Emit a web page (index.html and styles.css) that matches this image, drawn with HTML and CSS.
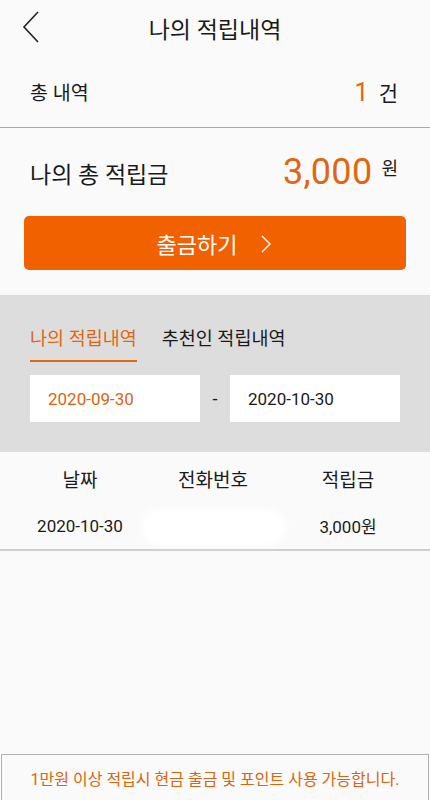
FILE: index.html
```html
<!DOCTYPE html>
<html lang="ko">
<head>
<meta charset="utf-8">
<link rel="stylesheet" href="styles.css">
</head>
<body>
<div class="page">
  <header class="topbar">
    <svg class="back" width="20" height="34" viewBox="0 0 20 34"><path d="M16 1 L2 16 L16 31" fill="none" stroke="#222" stroke-width="1.6"/></svg>
    <h1 class="title">나의 적립내역</h1>
  </header>
  <div class="count-row">
    <span>총 내역</span>
    <span class="count"><b class="orange">1</b> 건</span>
  </div>
  <div class="total-row">
    <span class="total-label">나의 총 적립금</span>
    <span class="total-val"><b class="orange big">3,000</b><span class="won">원</span></span>
  </div>
  <div class="btn-wrap">
    <button class="withdraw">출금하기 <svg class="chev" width="10" height="18" viewBox="0 0 10 18"><path d="M1 1 L9 9 L1 17" fill="none" stroke="#fff" stroke-width="1.4"/></svg></button>
  </div>
  <section class="filter">
    <nav class="tabs">
      <span class="tab active">나의 적립내역</span>
      <span class="tab">추천인 적립내역</span>
    </nav>
    <div class="dates">
      <div class="date orange-text">2020-09-30</div>
      <span class="dash">-</span>
      <div class="date">2020-10-30</div>
    </div>
  </section>
  <div class="table">
    <div class="trow head"><span>날짜</span><span>전화번호</span><span>적립금</span></div>
    <div class="trow body"><span>2020-10-30</span><span class="blur"></span><span>3,000원</span></div>
  </div>
  <div class="spacer"></div>
  <footer class="notice">1만원 이상 적립시 현금 출금 및 포인트 사용 가능합니다.</footer>
</div>
</body>
</html>
```
FILE: styles.css
```css
* { box-sizing: border-box; }
html, body { margin: 0; padding: 0; }
body {
  background: #fafafa;
  font-family: "Roboto", "Noto Sans CJK KR", sans-serif;
  color: #1a1a1a;
}
.page {
  width: 430px;
  height: 800px;
  display: flex;
  flex-direction: column;
}
.topbar {
  height: 56px;
  display: flex;
  align-items: center;
  justify-content: center;
  position: relative;
}
.back { position: absolute; left: 22px; top: 11px; }
.title {
  margin: 0;
  font-size: 23px;
  font-weight: 400;
  padding-left: 0;
}
.orange { color: #e0670f; font-weight: 400; }
.orange-text { color: #d9650f; }
.count-row {
  height: 72px;
  display: flex;
  justify-content: space-between;
  align-items: center;
  padding: 0 32px 0 30px;
  font-size: 19.5px;
  border-bottom: 1px solid #a8a8a8;
}
.count { font-size: 21px; }
.count b { font-size: 25px; margin-right: 5px; }
.total-row {
  height: 88px;
  display: flex;
  justify-content: space-between;
  align-items: center;
  padding: 0 32px 0 30px;
}
.total-label { font-size: 23px; padding-top: 2px; }
.total-val { display: flex; align-items: flex-start; }
.big { font-size: 36px; line-height: 40px; letter-spacing: 0.3px; }
.won { font-size: 18px; margin-left: 9px; margin-top: 2px; }
.btn-wrap { padding: 0 24px; }
.withdraw {
  width: 100%;
  height: 54px;
  border: none;
  border-radius: 5px;
  background: #f26100;
  color: #fff;
  font-family: inherit;
  font-size: 22px;
  display: flex;
  align-items: center;
  justify-content: center;
  gap: 24px;
  padding-left: 4px;
}
.chev { margin-top: 1px; }
.filter {
  margin-top: 25px;
  background: #dddddd;
  padding: 29px 30px 30px;
}
.tabs { display: flex; gap: 25px; }
.tab {
  font-size: 18.5px;
  padding: 0 0 10px;
  border-bottom: 2px solid transparent;
}
.tab.active { color: #e0670f; border-bottom-color: #e0670f; }
.dates {
  margin-top: 13px;
  display: flex;
  align-items: center;
  justify-content: space-between;
}
.date {
  width: 170px;
  height: 47px;
  background: #fff;
  font-size: 17px;
  display: flex;
  align-items: center;
  padding-left: 18px;
}
.dash { font-size: 18px; }
.table { border-bottom: 2px solid #cfcfcf; }
.trow {
  display: grid;
  grid-template-columns: 160px 106px 164px;
  align-items: center;
  text-align: center;
}
.trow.head { height: 50px; font-size: 19px; padding-top: 2px; }
.trow.body { height: 47px; font-size: 17px; }
.blur {
  display: block;
  width: 145px;
  height: 36px;
  background: #fff;
  border-radius: 18px;
  justify-self: center;
  filter: blur(3px);
  margin-top: 2px;
}
.spacer { flex: 1; }
.notice {
  height: 46px;
  margin: 0 1px;
  border: 1px solid #b0b0b0;
  border-bottom: none;
  background: #fafafa;
  color: #d9650f;
  font-size: 16px;
  display: flex;
  align-items: center;
  justify-content: center;
}
```
